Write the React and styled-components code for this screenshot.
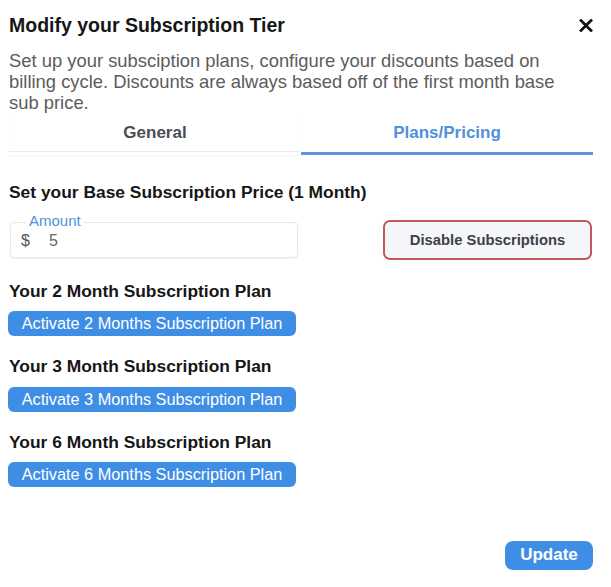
import styled, { createGlobalStyle } from "styled-components";

const GlobalStyle = createGlobalStyle`
  body {
    margin: 0;
    background: #fff;
    font-family: "Liberation Sans", Arial, Helvetica, sans-serif;
    color: #1b1b1b;
  }
`;

const Modal = styled.div`
  width: 611px;
  box-sizing: border-box;
  padding: 13px 18px 0 9px;
  display: flex;
  flex-direction: column;
`;

const Header = styled.div`
  display: flex;
  align-items: center;
  justify-content: space-between;
`;

const Title = styled.h2`
  margin: 0;
  font-size: 19.5px;
  line-height: 24px;
  font-weight: 700;
  color: #161616;
`;

const CloseButton = styled.button`
  border: 0;
  background: none;
  padding: 0;
  width: 14px;
  height: 14px;
  display: flex;
  align-items: center;
  justify-content: center;
  cursor: pointer;
`;

const Description = styled.p`
  margin: 12.5px 0 0;
  max-width: 575px;
  font-size: 18.4px;
  line-height: 21px;
  color: #5c5c5c;
`;

const TabBar = styled.div`
  display: grid;
  grid-template-columns: 1fr 1fr;
`;

const Tab = styled.div`
  text-align: center;
  padding: 10px 0 9px;
  font-size: 17px;
  line-height: 20px;
  font-weight: 700;
  color: ${(p) => (p.$active ? "#5190dc" : "#4a4d55")};
  border-bottom: 3px solid ${(p) => (p.$active ? "#5b96dc" : "transparent")};
  box-shadow: ${(p) =>
    p.$active ? "none" : "inset 0 -1px 0 #ebebeb, 0 2px 2px -1px rgba(0,0,0,0.06)"};
`;

const SectionHeading = styled.h3`
  margin: ${(p) => p.$top || "20px"} 0 0;
  font-size: 17.4px;
  line-height: 20px;
  font-weight: 700;
  color: #161616;
`;

const PriceRow = styled.div`
  margin-top: 18px;
  display: flex;
  align-items: center;
  justify-content: space-between;
`;

const AmountField = styled.div`
  position: relative;
  margin-left: 1px;
  width: 288px;
  height: 36px;
  box-sizing: border-box;
  border: 1px solid #e6e6e6;
  border-radius: 4px;
  box-shadow: 0 1px 2px rgba(0, 0, 0, 0.05);
  display: flex;
  align-items: center;
  padding: 2px 10px 0;
  gap: 19px;
  font-size: 16px;
  color: #555;
`;

const FieldLabel = styled.span`
  position: absolute;
  top: -10px;
  left: 15px;
  padding: 0 3px;
  background: #fff;
  font-size: 15px;
  line-height: 16px;
  color: #5190dc;
`;

const Currency = styled.span`
  color: #555;
`;

const AmountInput = styled.input`
  border: 0;
  outline: none;
  padding: 0;
  font: inherit;
  color: #666;
  width: 100%;
  background: transparent;
`;

const DisableButton = styled.button`
  margin-right: 1px;
  width: 209px;
  height: 40px;
  box-sizing: border-box;
  border: 2px solid #c4575c;
  border-radius: 7px;
  background: #f4f6f9;
  font-family: inherit;
  font-size: 14.8px;
  font-weight: 700;
  color: #3d4047;
  cursor: pointer;
`;

const ActivateButton = styled.button`
  margin: 10.5px 0 0 -1px;
  align-self: flex-start;
  width: 288px;
  height: 25px;
  border: 0;
  border-radius: 6px;
  background: #3f8ee6;
  color: #fff;
  font-family: inherit;
  font-size: 16.3px;
  line-height: 25px;
  padding: 0;
  cursor: pointer;
`;

const Footer = styled.div`
  margin-top: 53.5px;
  display: flex;
  justify-content: flex-end;
`;

const UpdateButton = styled.button`
  width: 88px;
  height: 29px;
  border: 0;
  border-radius: 8px;
  background: #3f8ee6;
  color: #fff;
  font-family: inherit;
  font-size: 17px;
  font-weight: 700;
  padding: 0;
  cursor: pointer;
`;

const plans = [2, 3, 6];

export default function App() {
  return (
    <>
      <GlobalStyle />
      <Modal>
        <Header>
          <Title>Modify your Subscription Tier</Title>
          <CloseButton aria-label="Close">
            <svg width="14" height="13" viewBox="0 0 14 13">
              <path d="M2 1.5 L12 11.5 M12 1.5 L2 11.5" stroke="#111" strokeWidth="2.8" strokeLinecap="square" />
            </svg>
          </CloseButton>
        </Header>
        <Description>
          Set up your subsciption plans, configure your discounts based on billing cycle. Discounts are always based off of the first month base sub price.
        </Description>
        <TabBar>
          <Tab>General</Tab>
          <Tab $active>Plans/Pricing</Tab>
        </TabBar>
        <SectionHeading $top="27px">Set your Base Subscription Price (1 Month)</SectionHeading>
        <PriceRow>
          <AmountField>
            <FieldLabel>Amount</FieldLabel>
            <Currency>$</Currency>
            <AmountInput defaultValue="5" />
          </AmountField>
          <DisableButton>Disable Subscriptions</DisableButton>
        </PriceRow>
        {plans.map((m, i) => (
          <div key={m} style={{ display: "contents" }}>
            <SectionHeading $top={i === 0 ? "21px" : "20px"}>Your {m} Month Subscription Plan</SectionHeading>
            <ActivateButton>Activate {m} Months Subscription Plan</ActivateButton>
          </div>
        ))}
        <Footer>
          <UpdateButton>Update</UpdateButton>
        </Footer>
      </Modal>
    </>
  );
}
